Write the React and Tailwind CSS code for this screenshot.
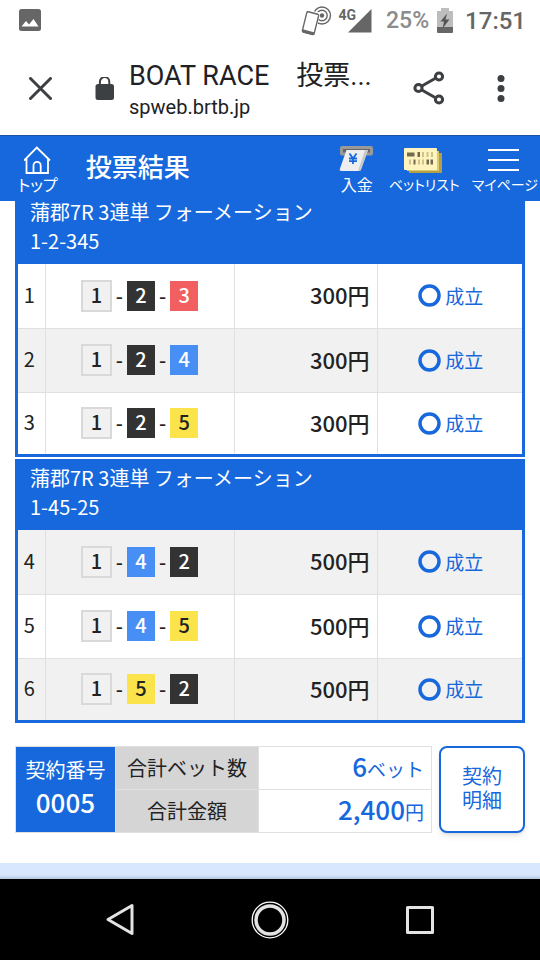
import clsx from 'clsx';

const chipColors = {
  1: 'w-[31px] h-8 bg-[#f1f1f1] text-[#222222] border-2 border-[#d9d9d9]',
  2: 'h-[30px] w-7 bg-[#333333] text-white',
  3: 'h-[30px] w-7 bg-[#f25f61] text-white',
  4: 'h-[30px] w-7 bg-[#488ff5] text-white',
  5: 'h-[30px] w-7 bg-[#fae34b] text-[#222222]',
};

const groups = [
  {
    title: '蒲郡7R 3連単 フォーメーション',
    numbers: '1-2-345',
    bets: [
      { no: 1, boats: [1, 2, 3], amount: 300 },
      { no: 2, boats: [1, 2, 4], amount: 300 },
      { no: 3, boats: [1, 2, 5], amount: 300 },
    ],
  },
  {
    title: '蒲郡7R 3連単 フォーメーション',
    numbers: '1-45-25',
    bets: [
      { no: 4, boats: [1, 4, 2], amount: 500 },
      { no: 5, boats: [1, 4, 5], amount: 500 },
      { no: 6, boats: [1, 5, 2], amount: 500 },
    ],
  },
];

const StatusBar = () => (
  <div className="flex h-[42px] items-center justify-between pl-[18px] pr-3.5 font-['Roboto',sans-serif] text-[#666666]">
    <svg className="h-6 w-6" viewBox="0 0 24 24" aria-hidden="true">
      <rect x="1" y="0" width="22" height="22" rx="2.5" fill="currentColor" />
      <path d="M3.5 17.5L8 12l3 3.4L15.5 10l5 7.5z" fill="#fff" />
    </svg>
    <div className="flex items-center">
      {/* NFC phone */}
      <svg className="h-8 w-8" viewBox="0 0 32 32" fill="none" stroke="currentColor" aria-hidden="true">
        <circle cx="22" cy="10.5" r="8.5" strokeWidth="1.4" />
        <circle cx="22" cy="10.5" r="5.2" strokeWidth="1.4" />
        <circle cx="22" cy="10.5" r="2.2" fill="currentColor" stroke="none" />
        <path d="M7 5L20 7.500 15 32 2 28z" fill="#fff" stroke="none" />
        <path d="M8.300 6.800l9.400 2.400q1.200.4.9 1.600l-4.400 17.500q-.4 1.300-1.600 1l-9.300-2.400q-1.200-.4-.9-1.600L6.800 7.700q.4-1.200 1.500-.9z" fill="#fff" strokeWidth="1.400" />
        <path d="M2.600 24.300l12.300 3.200-.4 1.600q-.5 1.400-1.900 1.100l-9.600-2.500q-1.300-.4-1-1.700z" fill="currentColor" stroke="none" />
      </svg>
      <span className="ml-1.5 self-start text-sm font-bold leading-5">4G</span>
      <svg className="-ml-2 h-6 w-6" viewBox="0 0 24 24" aria-hidden="true">
        <path d="M0 23.500L23.500 0v23.500z" fill="currentColor" />
      </svg>
      <span className="ml-3.5 text-[23px] font-medium leading-8 text-[#8c8c8c]">25%</span>
      <svg className="ml-2 h-[26px] w-4" viewBox="0 0 16 26" aria-hidden="true">
        <path d="M4 0h8v3h4v17H0V3h4z" fill="#bdbdbd" />
        <path d="M0 19h16v5q0 1-1 1H1q-1 0-1-1z" fill="#666" />
        <path d="M10 5.500L3.500 13.500H7L5.500 20.500 12.500 11.500H8.500z" fill="#555" />
      </svg>
      <span className="ml-3 text-2xl font-medium leading-8">17:51</span>
    </div>
  </div>
);

const BrowserBar = () => (
  <div className="flex h-[93px] items-center pl-7 pr-6 font-['Roboto','Noto_Sans_CJK_JP',sans-serif] text-[#202124]">
    <button type="button" aria-label="閉じる" className="h-6 w-6 shrink-0">
      <svg viewBox="0 0 24 24" stroke="#3c4043" strokeWidth="3" strokeLinecap="round">
        <path d="M2.500 1.500l20 20M22.500 1.500l-20 20" />
      </svg>
    </button>
    <svg className="ml-[43px] h-6 w-[19px] shrink-0" viewBox="0 0 19 24" aria-hidden="true">
      <rect x="0.500" y="7" width="18.500" height="16" rx="2.500" fill="#3c4043" />
      <path d="M4.900 8V4.800a4.700 4.700 0 0 1 9.400 0V8" fill="none" stroke="#3c4043" strokeWidth="2" />
    </svg>
    <div className="ml-[15px] min-w-0 flex-1 pt-1">
      <p className="whitespace-nowrap text-[27px] leading-8">BOAT RACE　投票...</p>
      <p className="text-xl leading-[30px]">spweb.brtb.jp</p>
    </div>
    <button type="button" aria-label="共有" className="h-9 w-8 shrink-0">
      <svg viewBox="0 0 32 36" fill="none" stroke="#3c4043" strokeWidth="3">
        <path d="M9 15.500L23 7.500M9 18.500L23 26.500" />
        <circle cx="6.500" cy="17" r="3.600" />
        <circle cx="27" cy="5.500" r="3.600" />
        <circle cx="27" cy="28.500" r="3.600" />
      </svg>
    </button>
    <button type="button" aria-label="メニュー" className="ml-10 h-7 w-8 shrink-0">
      <svg viewBox="0 0 32 28" fill="#3c4043">
        <circle cx="17" cy="3.500" r="3.500" />
        <circle cx="17" cy="13.500" r="3.500" />
        <circle cx="17" cy="23.500" r="3.500" />
      </svg>
    </button>
  </div>
);

const HeaderLink = ({ label, small, children }) => (
  <a href="#" className="flex flex-col items-center [font-feature-settings:'palt']">
    {children}
    <span className={clsx('whitespace-nowrap', small ? 'text-sm/5' : 'text-base/5')}>{label}</span>
  </a>
);

const Header = () => (
  <header className="relative z-10 flex h-[66px] items-start border-t border-[#17549f] bg-[#1668dc] pl-[18px] pr-0.5 pt-2.5 text-white">
    <HeaderLink label="トップ">
      <svg className="h-7 w-7" viewBox="0 0 28 28" fill="none" stroke="currentColor" strokeWidth="1.800">
        <path d="M0 14.500L12.800 1.500l13.200 13M2.500 12.500V27h21.500V12.500M9.500 27v-7.500a3.600 3.600 0 0 1 7.200 0V27" />
      </svg>
    </HeaderLink>
    <h1 className="ml-7 flex-1 whitespace-nowrap text-[26px] font-medium leading-10">投票結果</h1>
    <nav className="flex gap-3">
      <HeaderLink label="入金">
        <svg className="h-7 w-10" viewBox="0 0 40 28">
          <rect x="3" y="0" width="33" height="9.500" rx="2" fill="#999" />
          <path d="M6 3h27v3.500H6z" fill="#666" />
          <path d="M9.500 4H31l-7 19.500Q23.500 25 22 25H4.500Q2 25 3 22.500z" fill="#eee" />
          <path d="M28 4h3l-7 19.500Q23.500 25 22 25h-1z" fill="#c8c8c8" />
          <path d="M12.500 7.500l3.500 5 3.500-5M16 12.500v5.500M12 12.500h8M12 15.200h8" fill="none" stroke="#1668dc" strokeWidth="1.800" />
        </svg>
      </HeaderLink>
      <HeaderLink label="ベットリスト" small>
        <svg className="h-7 w-10" viewBox="0 0 40 28">
          <path d="M5 7h33v20H5z" fill="#b39f48" />
          <path d="M3 5h32v20H3z" fill="#d9c96f" />
          <rect x="0" y="2" width="33" height="22" rx="1" fill="#fff4bd" />
          <path d="M3 6.500h7.500v4H3zM13.500 6h2.500v5h-2.500zM9.500 13.500h2v5h-2zM22.500 13.500h2.500v5h-2.500zM26.500 13.500h2.500v5h-2.500z" fill="#716a50" />
          <path d="M18 6h2v5h-2zM22.500 6h2v5h-2zM27 6h2v5h-2zM5 13.500h2v5H5zM14 13.500h2v5h-2zM18 13.500h2v5h-2z" fill="#cfc38b" />
        </svg>
      </HeaderLink>
      <HeaderLink label="マイページ" small>
        <svg className="h-7 w-9" viewBox="0 0 36 28" stroke="currentColor" strokeWidth="2">
          <path d="M1 4h31M1 14h31M1 24h31" />
        </svg>
      </HeaderLink>
    </nav>
  </header>
);

const BetGroup = ({ group }) => (
  <section className="border-[3px] border-[#1668dc]">
    <h2 className="bg-[#1668dc] px-3 pb-[9px] pt-px text-xl font-normal leading-[29px] text-white">
      {group.title}
      <br />
      {group.numbers}
    </h2>
    <table className="w-full table-fixed border-collapse text-[#222222]">
      <colgroup>
        <col className="w-[27px]" />
        <col className="w-[37.5%]" />
        <col className="w-[28.4%]" />
        <col />
      </colgroup>
      <tbody>
        {group.bets.map((bet) => (
          <tr
            key={bet.no}
            className={clsx(
              'h-16 border-b border-[#e0e0e0] last:h-[62px] last:border-b-0',
              bet.no % 2 === 0 && 'bg-[#f1f1f1]'
            )}
          >
            <td className="border-r border-[#e0e0e0] pb-0.5 pl-0 pr-1 pt-0 text-center text-xl">{bet.no}</td>
            <td className="border-r border-[#e0e0e0] p-0">
              <div className="flex items-center justify-center gap-1 text-xl font-medium">
                {bet.boats.map((boat, i) => (
                  <div key={i} className="flex items-center gap-1">
                    {i > 0 && <span>-</span>}
                    <span className={clsx('flex items-center justify-center pb-0.5', chipColors[boat])}>{boat}</span>
                  </div>
                ))}
              </div>
            </td>
            <td className="border-r border-[#e0e0e0] pb-0.5 pl-0 pr-[7px] pt-0 text-right text-[22px] font-medium">
              {bet.amount}円
            </td>
            <td className="py-0 pl-0.5 pr-0 text-[#1668dc]">
              <div className="flex items-center justify-center gap-1 text-[19px]">
                <svg className="h-[23px] w-[23px]" viewBox="0 0 23 23" aria-hidden="true">
                  <circle cx="11.500" cy="11.500" r="9.500" fill="none" stroke="currentColor" strokeWidth="3.500" />
                </svg>
                成立
              </div>
            </td>
          </tr>
        ))}
      </tbody>
    </table>
  </section>
);

const Summary = () => (
  <div className="mt-[23px] flex gap-[7px]">
    <table className="flex-1 table-fixed border-collapse text-xl text-[#222222]">
      <colgroup>
        <col className="w-[24%]" />
        <col className="w-[34.5%]" />
        <col />
      </colgroup>
      <tbody>
        <tr className="h-[43px]">
          <th
            rowSpan={2}
            className="border border-[#e0e0e0] bg-[#1668dc] px-0 pb-2 pt-0 font-normal leading-8 text-white"
          >
            契約番号
            <span className="block text-[26px] font-medium">0005</span>
          </th>
          <th className="border border-[#e0e0e0] bg-[#d5d5d5] p-0 font-normal">合計ベット数</th>
          <td className="border border-[#e0e0e0] pb-0.5 pl-0 pr-[7px] pt-0 text-right text-[19px] leading-8 text-[#1668dc]">
            <span className="text-[26px] font-medium">6</span>ベット
          </td>
        </tr>
        <tr className="h-[43px]">
          <th className="border border-[#e0e0e0] bg-[#d5d5d5] p-0 font-normal">合計金額</th>
          <td className="border border-[#e0e0e0] pb-0.5 pl-0 pr-[7px] pt-0 text-right text-[19px] leading-8 text-[#1668dc]">
            <span className="text-[26px] font-medium">2,400</span>円
          </td>
        </tr>
      </tbody>
    </table>
    <button
      type="button"
      className="w-[86px] rounded-lg border-2 border-[#1668dc] bg-white pb-1 text-xl leading-6 text-[#1668dc] shadow-md"
    >
      <span className="block">契約</span>
      <span className="block">明細</span>
    </button>
  </div>
);

const NavigationBar = () => (
  <div className="flex h-[81px] items-center justify-center gap-[110px] bg-black text-[#e3e3e3]">
    <button type="button" aria-label="戻る" className="h-10 w-10">
      <svg viewBox="0 0 40 40" fill="none" stroke="currentColor" strokeWidth="3" strokeLinejoin="round">
        <path d="M32 5.500v28L8 19.500z" />
      </svg>
    </button>
    <button type="button" aria-label="ホーム" className="h-10 w-10">
      <svg viewBox="0 0 40 40" fill="none" stroke="currentColor">
        <circle cx="20" cy="20" r="17.800" stroke="#fff" strokeWidth="1.300" />
        <circle cx="20" cy="20" r="14" strokeWidth="3.500" />
      </svg>
    </button>
    <button type="button" aria-label="アプリ履歴" className="h-10 w-10">
      <svg viewBox="0 0 40 40" fill="none" stroke="currentColor" strokeWidth="3" strokeLinejoin="round">
        <rect x="7.500" y="7.500" width="25" height="25" />
      </svg>
    </button>
  </div>
);

const App = () => {
  return (
    <div className="flex min-h-screen flex-col bg-white font-['Noto_Sans_CJK_JP',sans-serif]">
      <StatusBar />
      <BrowserBar />
      <Header />
      {/* The list is scrolled a little under the header */}
      <main className="-mt-2 flex-1 px-[15px] pb-[30px]">
        <div className="flex flex-col gap-0.5">
          {groups.map((group) => (
            <BetGroup key={group.numbers} group={group} />
          ))}
        </div>
        <Summary />
      </main>
      <div className="h-4 bg-linear-to-b from-[#d8e7fd] from-75% to-[#b4c6dd]" />
      <NavigationBar />
    </div>
  );
};

export default App;
